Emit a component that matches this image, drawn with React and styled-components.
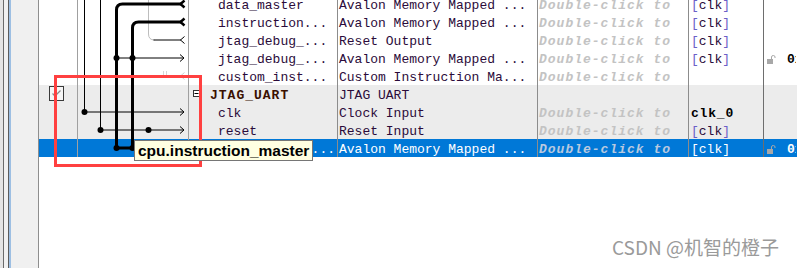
import React from 'react';
import styled, { createGlobalStyle } from 'styled-components';

const GlobalStyle = createGlobalStyle`
  html, body {
    margin: 0;
    padding: 0;
    background: #fff;
  }
  body {
    width: 797px;
    height: 268px;
    overflow: hidden;
    font-family: "Liberation Mono", "DejaVu Sans Mono", monospace;
  }
`;

const Page = styled.div`
  display: flex;
  height: 268px;
`;

const SidePanel = styled.div`
  flex: none;
  width: 39px;
  background: linear-gradient(
    to right,
    #e4e4e4 0 3px,
    #6a6a6a 3px 4px,
    #f0f0f0 4px 8px,
    #5c5c5c 8px 9px,
    #9dbfe3 9px 11px,
    #f0f0f0 11px 38px,
    #8e8e8e 38px 39px
  );
`;

const Main = styled.div`
  position: relative;
  flex: 1;
  overflow: hidden;
`;

const Table = styled.div`
  margin-top: -5px;
`;

const Row = styled.div`
  display: grid;
  grid-template-columns: 39px 111px 149px 200px 151px 75px 1fr;
  height: 18px;
  background: ${(p) => (p.$selected ? '#0078d7' : p.$group ? '#ececec' : 'transparent')};
  color: ${(p) => (p.$selected ? '#ffffff' : '#2b0b3a')};
`;

const Cell = styled.div`
  box-sizing: border-box;
  height: 18px;
  border-right: 1px solid ${(p) => p.$line || '#8c8c8c'};
  overflow: hidden;
  white-space: nowrap;
  padding: 2px 0 0 ${(p) => p.$pad || 0}px;
  font-size: 13px;
  line-height: 17px;
`;

const CheckCell = styled(Cell)`
  padding: 1px 0 0 10px;
`;

const WireCell = styled(Cell)`
  padding: 0;
`;

const Wires = styled.svg`
  display: block;
  width: 110px;
  height: 18px;
`;

const ModuleName = styled.span`
  font-weight: bold;
  letter-spacing: 1px;
  color: #3a1000;
`;

const ExportText = styled.span`
  font-style: italic;
  font-weight: bold;
  letter-spacing: 1px;
  color: ${(p) => (p.$selected ? '#b9c9df' : '#c3c3c3')};
`;

const Bracket = styled.span`
  color: ${(p) => (p.$selected ? '#ffffff' : '#6b5fc8')};
`;

const ClockName = styled.span`
  font-weight: bold;
  letter-spacing: 0.8px;
  color: #000;
`;

const BaseText = styled.span`
  margin-left: 11px;
  font-weight: bold;
  color: ${(p) => (p.$selected ? '#fff' : '#000')};
`;

const Expander = styled.svg`
  width: 7px;
  height: 7px;
  margin: 0 10px 0 4px;
  vertical-align: 2px;
`;

const LockIcon = styled.svg`
  width: 9px;
  height: 9px;
  vertical-align: -1px;
`;

const Tooltip = styled.div`
  position: absolute;
  left: 95px;
  top: 140px;
  box-sizing: border-box;
  height: 21px;
  padding: 0 3px;
  border: 1px solid #767676;
  background: #ffffe1;
  color: #000;
  font-family: "Liberation Sans", Arial, sans-serif;
  font-weight: bold;
  font-size: 15.5px;
  line-height: 19px;
  white-space: nowrap;
  z-index: 2;
`;

const Callout = styled.div`
  position: absolute;
  left: 15px;
  top: 75px;
  box-sizing: border-box;
  width: 148px;
  height: 92px;
  border: 3px solid #ff4040;
  z-index: 1;
`;

const Watermark = styled.div`
  position: absolute;
  left: 573px;
  top: 235px;
  font-family: "Noto Sans CJK SC", "Noto Sans", sans-serif;
  font-size: 19px;
  line-height: 24px;
  color: #9a9a9a;
  text-shadow: 0 0 1px #fff;
  white-space: nowrap;
`;

// wire x positions inside the connections column
const T1 = 6.5;
const T2 = 22.5;
const K1 = 38.5;
const K2 = 54.5;
const G = 70.5;

const V = ({ x, y1 = 0, y2 = 18, w = 1, c = '#000' }) => (
  <line x1={x} x2={x} y1={y1} y2={y2} stroke={c} strokeWidth={w} />
);
const H = ({ x1, x2, w = 1, c = '#000' }) => (
  <line x1={x1} x2={x2} y1={9} y2={9} stroke={c} strokeWidth={w} />
);
const Dot = ({ x }) => <circle cx={x} cy={9} r={3} fill="#000" />;
const Fork = ({ w = 1, c = '#000' }) => (
  <polyline points="106.5,5.5 102.5,9 106.5,12.5" fill="none" stroke={c} strokeWidth={w} />
);
const Arrow = () => (
  <polyline points="102,5.5 106,9 102,12.5" fill="none" stroke="#000" strokeWidth={1} />
);
const Corner = ({ x }) => (
  <path d={`M${x} 18 V15 Q${x} 9 ${x + 6} 9 H103`} fill="none" stroke="#000" strokeWidth={3} />
);

const wiring = [
  <>
    <V x={T1} />
    <V x={T2} />
    <V x={G} c="#bdbdbd" />
    <Corner x={K1} />
    <Fork w={2.5} />
  </>,
  <>
    <V x={T1} />
    <V x={T2} />
    <V x={G} c="#bdbdbd" />
    <V x={K1} w={3} />
    <Corner x={K2} />
    <Fork w={2.5} />
  </>,
  <>
    <V x={T1} />
    <V x={T2} />
    <V x={K1} w={3} />
    <V x={K2} w={3} />
    <path d={`M${G} 0 V3 Q${G} 9 ${G + 6} 9`} fill="none" stroke="#bdbdbd" strokeWidth={1} />
    <H x1={G + 5} x2={103} />
    <Fork />
  </>,
  <>
    <V x={T1} />
    <V x={T2} />
    <V x={K1} w={3} />
    <V x={K2} w={3} />
    <H x1={K1} x2={105.5} />
    <Dot x={K1} />
    <Dot x={K2} />
    <Arrow />
  </>,
  <>
    <V x={T1} />
    <V x={T2} />
    <V x={K1} w={3} />
    <V x={K2} w={3} />
    <V x={85.5} y1={4} y2={9} c="#d6d6d6" />
    <V x={88.5} y1={4} y2={9} c="#d6d6d6" />
    <Fork c="#d0d0d0" />
  </>,
  <>
    <V x={T1} />
    <V x={T2} />
    <V x={K1} w={3} />
    <V x={K2} w={3} />
  </>,
  <>
    <V x={T1} y2={9} />
    <V x={T2} />
    <V x={K1} w={3} />
    <V x={K2} w={3} />
    <H x1={T1} x2={105.5} />
    <Dot x={T1} />
    <Arrow />
  </>,
  <>
    <V x={T2} y2={9} />
    <V x={K1} w={3} />
    <V x={K2} w={3} />
    <H x1={T2} x2={105.5} />
    <Dot x={T2} />
    <Dot x={G} />
    <Arrow />
  </>,
  <>
    <V x={K1} y2={9} w={3} />
    <V x={K2} y2={9} w={3} />
    <H x1={K1} x2={K2} w={3} />
    <H x1={K2} x2={105.5} />
    <Dot x={K1} />
    <Dot x={K2} />
    <Arrow />
  </>,
];

const rows = [
  { name: 'data_master', desc: 'Avalon Memory Mapped ...', exp: 'Double-click to', clock: 'clk' },
  { name: 'instruction...', desc: 'Avalon Memory Mapped ...', exp: 'Double-click to', clock: 'clk' },
  { name: 'jtag_debug_...', desc: 'Reset Output', exp: 'Double-click to', clock: 'clk' },
  { name: 'jtag_debug_...', desc: 'Avalon Memory Mapped ...', exp: 'Double-click to', clock: 'clk', base: '0x0000_0800' },
  { name: 'custom_inst...', desc: 'Custom Instruction Ma...', exp: 'Double-click to' },
  { name: 'JTAG_UART', desc: 'JTAG UART', module: true, group: true },
  { name: 'clk', desc: 'Clock Input', exp: 'Double-click to', source: 'clk_0', group: true },
  { name: 'reset', desc: 'Reset Input', exp: 'Double-click to', clock: 'clk', group: true },
  {
    name: 'avalon_jtag_...',
    desc: 'Avalon Memory Mapped ...',
    exp: 'Double-click to',
    clock: 'clk',
    base: '0x0000_1000',
    selected: true,
  },
];

function CheckBox() {
  return (
    <svg width="15" height="15" viewBox="0 0 15 15">
      <rect x="0.5" y="0.5" width="14" height="14" fill="#f6f6f6" stroke="#3a3a3a" />
      <path d="M3.5 7.5 L6 10 L11.5 4.5" fill="none" stroke="#8a8a8a" strokeWidth="1.3" />
    </svg>
  );
}

function Lock() {
  return (
    <LockIcon viewBox="0 0 9 9">
      <rect x="0" y="4" width="6" height="5" fill="#a8a8a8" />
      <path d="M4.5 4 V2 Q4.5 0.5 6.3 0.5 Q8 0.5 8 2 V3" fill="none" stroke="#a8a8a8" strokeWidth="1" />
    </LockIcon>
  );
}

function ClockRef({ name, selected }) {
  return (
    <>
      <Bracket $selected={selected}>[</Bracket>
      {name}
      <Bracket $selected={selected}>]</Bracket>
    </>
  );
}

function InterfaceRow({ row, index }) {
  return (
    <Row $group={row.group} $selected={row.selected}>
      <CheckCell $line="#a0a0a0">{row.module && <CheckBox />}</CheckCell>
      <WireCell $line="#a0a0a0">
        <Wires viewBox="0 0 110 18">{wiring[index]}</Wires>
      </WireCell>
      <Cell $pad={row.module ? 0 : 29}>
        {row.module ? (
          <>
            <Expander viewBox="0 0 7 7">
              <rect x="0.5" y="0.5" width="6" height="6" fill="#fff" stroke="#333" />
              <line x1="1.5" x2="5.5" y1="3.5" y2="3.5" stroke="#000" />
            </Expander>
            <ModuleName>{row.name}</ModuleName>
          </>
        ) : (
          row.name
        )}
      </Cell>
      <Cell $pad={1}>{row.desc}</Cell>
      <Cell $pad={1}>{row.exp && <ExportText $selected={row.selected}>{row.exp}</ExportText>}</Cell>
      <Cell $pad={2} $line="#6e6e6e">
        {row.clock && <ClockRef name={row.clock} selected={row.selected} />}
        {row.source && <ClockName>{row.source}</ClockName>}
      </Cell>
      <Cell $pad={3} $line="transparent">
        {row.base && (
          <>
            <Lock />
            <BaseText $selected={row.selected}>{row.base}</BaseText>
          </>
        )}
      </Cell>
    </Row>
  );
}

export default function App() {
  return (
    <>
      <GlobalStyle />
      <Page>
        <SidePanel />
        <Main>
          <Table>
            {rows.map((row, i) => (
              <InterfaceRow key={i} row={row} index={i} />
            ))}
          </Table>
          <Callout />
          <Tooltip>cpu.instruction_master</Tooltip>
          <Watermark>CSDN @机智的橙子</Watermark>
        </Main>
      </Page>
    </>
  );
}
